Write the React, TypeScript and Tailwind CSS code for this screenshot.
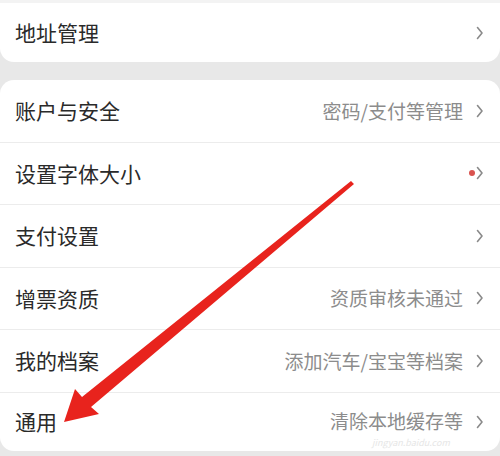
import React from "react";

const Chevron = () => (
  <svg width="8" height="14" viewBox="0 0 8 14" className="shrink-0">
    <polyline points="1.5,1.5 6,7 1.5,12.5" fill="none" stroke="#8a8a8a" strokeWidth="1.6" strokeLinecap="round" strokeLinejoin="round" />
  </svg>
);

type Row = { label: string; value?: string; dot?: boolean; last?: boolean };

const rows: Row[] = [
  { label: "账户与安全", value: "密码/支付等管理" },
  { label: "设置字体大小", dot: true },
  { label: "支付设置" },
  { label: "增票资质", value: "资质审核未通过" },
  { label: "我的档案", value: "添加汽车/宝宝等档案" },
  { label: "通用", value: "清除本地缓存等", last: true },
];

export default function App() {
  return (
    <div
      className="relative w-[500px] h-[456px] overflow-hidden bg-[#e8e8e8]"
      style={{ fontFamily: '"Noto Sans CJK SC", "Noto Sans", sans-serif' }}
    >
      <div className="h-[3px] bg-[#f3f3f3]" />
      <div className="bg-white rounded-b-[14px] h-[59px] flex items-center pl-[15px] pr-[16px]">
        <span className="flex-1 text-[21px] text-[#2a2a2a]">地址管理</span>
        <Chevron />
      </div>
      <div className="h-[18px]" />
      <div className="bg-white rounded-[14px] flex flex-col">
        {rows.map((r) => (
          <div
            key={r.label}
            className={
              r.last
                ? "h-[58px] flex items-center pl-[15px] pr-[16px]"
                : "h-[62.5px] flex items-center pl-[15px] pr-[16px] border-b border-[#ececec]"
            }
          >
            <span className="flex-1 text-[21px] text-[#2a2a2a]">{r.label}</span>
            {r.value && (
              <span className="text-[19px] text-[#8c8c8c] mr-[13px]">{r.value}</span>
            )}
            {r.dot && <span className="w-[6px] h-[6px] rounded-full bg-[#d9534f] mr-[1px]" />}
            <Chevron />
          </div>
        ))}
      </div>
      <div className="absolute left-[372px] top-[438px] text-[9px] leading-[10px] text-[#e6e6e6] italic">
        jingyan.baidu.com
      </div>
      <svg className="absolute left-0 top-0" width="500" height="456" viewBox="0 0 500 456">
        <polygon
          points="64,422 75,389 82,397 351,181 354,184 91,407 99,414"
          fill="#e8231d"
        />
      </svg>
    </div>
  );
}
